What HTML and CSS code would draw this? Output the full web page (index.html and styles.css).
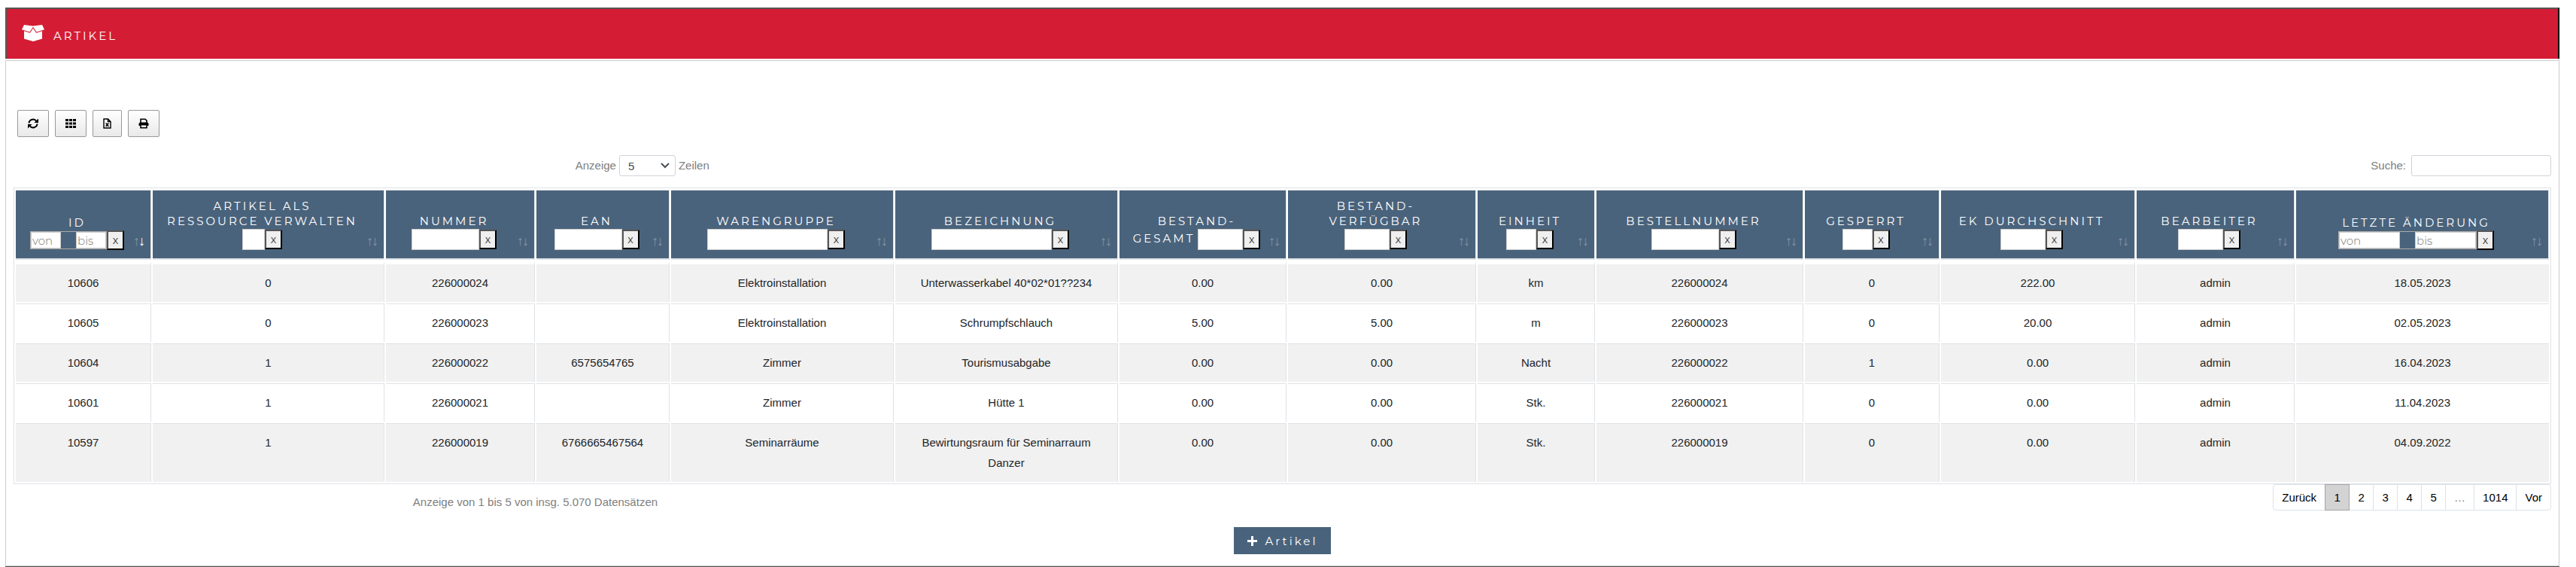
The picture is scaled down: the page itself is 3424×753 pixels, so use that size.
FILE: index.html
```html
<!DOCTYPE html>
<html lang="de">
<head>
    <meta charset="UTF-8">
    <meta name="viewport" content="width=device-width, initial-scale=1.0">
    <title>Artikel</title>
    <link rel="stylesheet" href="styles.css">
</head>
<body>
    <main class="panel">
        <button type="button" class="panel-header">
            <svg class="icon-box" viewBox="0 0 30 22" aria-hidden="true">
                <path fill="currentColor" d="M3 0 L15 1.5 L27 0 L30 6.2 L19.5 9.5 L15 2.8 L10.500 9.500 L0 6.200 Z"/>
                <path fill="currentColor" d="M3 8.200 L10.900 10.800 L15 4.600 L19.100 10.800 L27 8.200 V18.500 L15 22 L3 18.500 Z"/>
            </svg>
            <span>Artikel</span>
        </button>

        <div class="panel-body">
            <div class="toolbar">
                <button type="button" aria-label="Aktualisieren">
                    <svg viewBox="0 0 14 14" width="14" height="14" fill="none" stroke="currentColor" stroke-width="2">
                        <path d="M1.500 6.500 A5.500 5.500 0 0 1 11.500 4"/>
                        <path d="M12.500 7.500 A5.500 5.500 0 0 1 2.500 10"/>
                        <path d="M14 0.500 V6 H8.500 Z M0 13.500 V8 H5.500 Z" fill="currentColor" stroke="none"/>
                    </svg>
                </button>
                <button type="button" aria-label="Spalten">
                    <svg viewBox="0 0 14 14" width="14" height="14" fill="currentColor">
                        <path d="M0 1h4v3H0zM5 1h4v3H5zM10 1h4v3h-4zM0 5.500h4v3H0zM5 5.500h4v3H5zM10 5.500h4v3h-4zM0 10h4v3H0zM5 10h4v3H5zM10 10h4v3h-4z"/>
                    </svg>
                </button>
                <button type="button" aria-label="Excel">
                    <svg viewBox="0 0 11 14" width="11" height="14" fill="none" stroke="currentColor" stroke-width="1.400">
                        <path d="M1 1 H6.500 L10 4.500 V13 H1 Z M6.500 1 V4.500 H10"/>
                        <path d="M3.700 6.500 L7.300 11 M7.300 6.500 L3.700 11"/>
                    </svg>
                </button>
                <button type="button" aria-label="Drucken">
                    <svg viewBox="0 0 14 14" width="14" height="14" fill="none" stroke="currentColor" stroke-width="1.600">
                        <path d="M3 6 V1.200 H9 L11 3.200 V6"/>
                        <path d="M2 5.500 H12 L13.500 7 V10 H0.500 V7 Z" fill="currentColor" stroke="none"/>
                        <path d="M3 9.500 V12.800 H11 V9.500" fill="#fff"/>
                    </svg>
                </button>
            </div>

            <div class="table-controls">
                <div class="length">
                    <label for="rows">Anzeige</label>
                    <select id="rows">
                        <option>5</option>
                        <option>10</option>
                        <option>25</option>
                    </select>
                    <span>Zeilen</span>
                </div>
                <div class="search">
                    <label for="search">Suche:</label>
                    <input type="search" id="search">
                </div>
            </div>

            <table>
                <colgroup>
                    <col class="col-id">
                    <col class="col-ressource">
                    <col class="col-nummer">
                    <col class="col-ean">
                    <col class="col-gruppe">
                    <col class="col-gruppe">
                    <col class="col-gesamt">
                    <col class="col-verfuegbar">
                    <col class="col-einheit">
                    <col class="col-bestell">
                    <col class="col-gesperrt">
                    <col class="col-ek">
                    <col class="col-bearbeiter">
                    <col class="col-datum">
                </colgroup>
                <thead>
                    <tr>
                        <th class="sorted">
                            <label for="f-id">ID</label>
                            <div class="filter range short">
                                <div class="range-box"><input id="f-id" type="text" placeholder="von"><input type="text" placeholder="bis" aria-label="ID bis"></div><button type="button">x</button>
                            </div>
                        </th>
                        <th><label for="f-res">Artikel als<br>Ressource verwalten</label><div class="filter"><input id="f-res" class="w30" type="text"><button type="button">x</button></div></th>
                        <th><label for="f-num">Nummer</label><div class="filter"><input id="f-num" class="w90" type="text"><button type="button">x</button></div></th>
                        <th><label for="f-ean">EAN</label><div class="filter"><input id="f-ean" class="w90" type="text"><button type="button">x</button></div></th>
                        <th><label for="f-gruppe">Warengruppe</label><div class="filter"><input id="f-gruppe" class="w160" type="text"><button type="button">x</button></div></th>
                        <th><label for="f-bez">Bezeichnung</label><div class="filter"><input id="f-bez" class="w160" type="text"><button type="button">x</button></div></th>
                        <th class="inline"><label for="f-gesamt">Bestand-<br>Gesamt</label><div class="filter"><input id="f-gesamt" class="w60" type="text"><button type="button">x</button></div></th>
                        <th><label for="f-verf">Bestand-<br>Verfügbar</label><div class="filter"><input id="f-verf" class="w60" type="text"><button type="button">x</button></div></th>
                        <th><label for="f-einheit">Einheit</label><div class="filter"><input id="f-einheit" class="w40" type="text"><button type="button">x</button></div></th>
                        <th><label for="f-bestell">Bestellnummer</label><div class="filter"><input id="f-bestell" class="w90" type="text"><button type="button">x</button></div></th>
                        <th><label for="f-gesperrt">Gesperrt</label><div class="filter"><input id="f-gesperrt" class="w40" type="text"><button type="button">x</button></div></th>
                        <th><label for="f-ek">EK Durchschnitt</label><div class="filter"><input id="f-ek" class="w60" type="text"><button type="button">x</button></div></th>
                        <th><label for="f-bearbeiter">Bearbeiter</label><div class="filter"><input id="f-bearbeiter" class="w60" type="text"><button type="button">x</button></div></th>
                        <th>
                            <label for="f-datum">Letzte Änderung</label>
                            <div class="filter range">
                                <div class="range-box"><input id="f-datum" type="text" placeholder="von"><input type="text" placeholder="bis" aria-label="Letzte Änderung bis"></div><button type="button">x</button>
                            </div>
                        </th>
                    </tr>
                </thead>
                <tbody>
                    <tr><td>10606</td><td>0</td><td>226000024</td><td></td><td>Elektroinstallation</td><td>Unterwasserkabel 40*02*01??234</td><td>0.00</td><td>0.00</td><td>km</td><td>226000024</td><td>0</td><td>222.00</td><td>admin</td><td>18.05.2023</td></tr>
                    <tr><td>10605</td><td>0</td><td>226000023</td><td></td><td>Elektroinstallation</td><td>Schrumpfschlauch</td><td>5.00</td><td>5.00</td><td>m</td><td>226000023</td><td>0</td><td>20.00</td><td>admin</td><td>02.05.2023</td></tr>
                    <tr><td>10604</td><td>1</td><td>226000022</td><td>6575654765</td><td>Zimmer</td><td>Tourismusabgabe</td><td>0.00</td><td>0.00</td><td>Nacht</td><td>226000022</td><td>1</td><td>0.00</td><td>admin</td><td>16.04.2023</td></tr>
                    <tr><td>10601</td><td>1</td><td>226000021</td><td></td><td>Zimmer</td><td>Hütte 1</td><td>0.00</td><td>0.00</td><td>Stk.</td><td>226000021</td><td>0</td><td>0.00</td><td>admin</td><td>11.04.2023</td></tr>
                    <tr><td>10597</td><td>1</td><td>226000019</td><td>6766665467564</td><td>Seminarräume</td><td>Bewirtungsraum für Seminarraum Danzer</td><td>0.00</td><td>0.00</td><td>Stk.</td><td>226000019</td><td>0</td><td>0.00</td><td>admin</td><td>04.09.2022</td></tr>
                </tbody>
            </table>

            <div class="table-footer">
                <p class="info">Anzeige von 1 bis 5 von insg. 5.070 Datensätzen</p>
                <nav class="pagination">
                    <a href="#">Zurück</a>
                    <a href="#" class="active">1</a>
                    <a href="#">2</a>
                    <a href="#">3</a>
                    <a href="#">4</a>
                    <a href="#">5</a>
                    <span>…</span>
                    <a href="#">1014</a>
                    <a href="#">Vor</a>
                </nav>
            </div>

            <div class="actions">
                <button type="button" class="add">
                    <svg viewBox="0 0 13 13" width="13" height="13" aria-hidden="true"><path fill="currentColor" d="M5 0h3v5h5v3H8v5H5V8H0V5h5z"/></svg>
                    Artikel
                </button>
            </div>
        </div>
    </main>
</body>
</html>
```

FILE: styles.css
```css
:root {
    --red: #d41c34;
    --blue: #4a637c;
    --border: #dee2e6;
    --text: #212529;
    --muted: #808080;
    --heading-font: Montserrat, Lato, sans-serif;
}

* {
    box-sizing: border-box;
    margin: 0;
    padding: 0;
}

body {
    padding: 10px 22px 0 7px;
    background: #fff;
    color: var(--text);
    font-family: Arial, "Liberation Sans", sans-serif;
    font-size: 15px;
    line-height: 27px;
}

button {
    cursor: pointer;
}

/* Panel */
.panel {
    border-bottom: 1px solid #555;
}

.panel-header {
    display: flex;
    align-items: center;
    gap: 12px;
    width: 100%;
    height: 68px;
    padding: 0 20px;
    background: var(--red);
    color: #fff;
    border: 2px solid #555;
    border-right-color: #000;
    border-bottom: none;
    font-family: var(--heading-font);
    font-size: 15px;
    letter-spacing: 3px;
    text-transform: uppercase;
}

.panel-header span {
    padding-top: 4px;
}

.icon-box {
    width: 30px;
    height: 22px;
    margin-bottom: 2px;
}

.panel-body {
    margin-top: 2px;
    padding: 65px 10px 15px;
    border: 1px solid #ccc;
}

/* Buttons above the table */
.toolbar {
    display: flex;
    gap: 8px;
    padding-left: 5px;
}

.toolbar button {
    display: flex;
    align-items: center;
    height: 36px;
    padding: 0 13px;
    border: 1px solid #999;
    border-radius: 2px;
    background: linear-gradient(to bottom, #fff, #e9e9e9);
    color: #000;
}

.table-controls {
    display: flex;
    justify-content: space-between;
    align-items: center;
    margin: 24px 0 15px;
    color: var(--muted);
}

.length {
    display: flex;
    justify-content: center;
    gap: 4px;
    width: 50%;
    padding-right: 15px;
}

.length select,
.search input {
    height: 28px;
    border: 1px solid #ced4da;
    border-radius: 3px;
    background-color: #fff;
    color: #495057;
    font: inherit;
}

.length select {
    width: 75px;
    padding-left: 11px;
    appearance: none;
    background-image: url("data:image/svg+xml,%3Csvg xmlns='http://www.w3.org/2000/svg' viewBox='0 0 12 8'%3E%3Cpath d='M1 1l5 5 5-5' fill='none' stroke='%23495057' stroke-width='2'/%3E%3C/svg%3E");
    background-repeat: no-repeat;
    background-position: right 7px center;
    background-size: 12px 8px;
}

.search {
    display: flex;
    gap: 7px;
}

.search input {
    width: 186px;
    padding: 0 8px;
}

/* Table */
table {
    width: 100%;
    table-layout: fixed;
    border: 1px solid var(--border);
    border-collapse: separate;
    border-spacing: 2px;
    text-align: center;
}

.col-id { width: 180px; }
.col-ressource { width: 308px; }
.col-nummer { width: 198px; }
.col-ean { width: 177px; }
.col-gruppe { width: 296px; }
.col-gesamt { width: 222px; }
.col-verfuegbar { width: 250px; }
.col-einheit { width: 156px; }
.col-bestell { width: 275px; }
.col-gesperrt { width: 179px; }
.col-ek { width: 258px; }
.col-bearbeiter { width: 210px; }
.col-datum { width: 336px; }

th {
    position: relative;
    padding: 11px 28px 11px 12px;
    background: var(--blue);
    color: #fff;
    border-top: 1px solid var(--border);
    border-right: 1px solid var(--border);
    border-bottom: 2px solid var(--border);
    font-family: var(--heading-font);
    font-size: 15px;
    font-weight: 400;
    line-height: 20px;
    letter-spacing: 3px;
    text-transform: uppercase;
    vertical-align: bottom;
    white-space: nowrap;
}

th::before,
th::after {
    position: absolute;
    bottom: 13px;
    font-family: "Liberation Sans", sans-serif;
    font-size: 18px;
    letter-spacing: 0;
    opacity: 0.3;
}

th::before {
    content: "↑";
    right: 14px;
}

th::after {
    content: "↓";
    right: 7px;
}

th.sorted::after {
    opacity: 1;
}

th label {
    display: block;
}

.filter {
    display: flex;
    justify-content: center;
    align-items: center;
    letter-spacing: 0;
    text-transform: none;
}

.filter input {
    height: 28px;
    padding: 0 1px;
    border: 1px solid #ccc;
    background: #fff;
    font-family: var(--heading-font);
    font-size: 15px;
    font-weight: 300;
}

.filter input::placeholder {
    color: #757575;
}

.filter button {
    width: 23px;
    height: 26px;
    border: 2px solid;
    border-color: #555 #000 #000 #555;
    background: #efefef;
    color: #333;
    font-family: var(--heading-font);
    font-size: 14px;
    line-height: 20px;
}

.w30 { width: 30px; }
.w40 { width: 40px; }
.w60 { width: 60px; }
.w90 { width: 90px; }
.w160 { width: 160px; }

.inline label {
    display: inline;
}

.inline .filter {
    display: inline-flex;
    margin-left: 4px;
    vertical-align: middle;
}

.range-box {
    display: flex;
    gap: 20px;
    border: 1px solid #aaa;
}

.range-box input {
    width: 81px;
    height: 22px;
}

.short input {
    width: 40px;
}

td {
    padding: 11px 12px 12px;
    border-top: 1px solid var(--border);
    border-right: 1px solid var(--border);
    background-clip: padding-box;
    vertical-align: top;
}

td:last-child {
    border-right: none;
}

tbody tr:first-child td {
    border-top: 4px solid #fff;
}

tbody tr:nth-child(odd) td {
    background-color: #f1f1f1;
}

/* Below the table */
.table-footer {
    display: flex;
}

.info {
    width: 41%;
    padding: 10px 0 0 4px;
    color: var(--muted);
    text-align: center;
}

.pagination {
    display: flex;
    align-self: flex-start;
    margin-left: auto;
}

.pagination a,
.pagination span {
    min-width: 33px;
    height: 35px;
    margin-left: -1px;
    padding: 0 11px;
    border: 1px solid var(--border);
    color: #000;
    line-height: 33px;
    text-align: center;
    text-decoration: none;
}

.pagination span {
    color: #6c757d;
}

.pagination a:first-child {
    border-radius: 4px 0 0 4px;
}

.pagination a:last-child {
    border-radius: 0 4px 4px 0;
}

.pagination .active {
    position: relative;
    background: #d3d3d3;
    border-color: #a6a6a6;
}

.actions {
    display: flex;
    justify-content: center;
    margin-top: 20px;
}

.add {
    display: flex;
    align-items: center;
    gap: 11px;
    height: 36px;
    padding: 0 18px;
    border: none;
    background: var(--blue);
    color: #fff;
    font-family: var(--heading-font);
    font-size: 15px;
    letter-spacing: 3px;
}
```
